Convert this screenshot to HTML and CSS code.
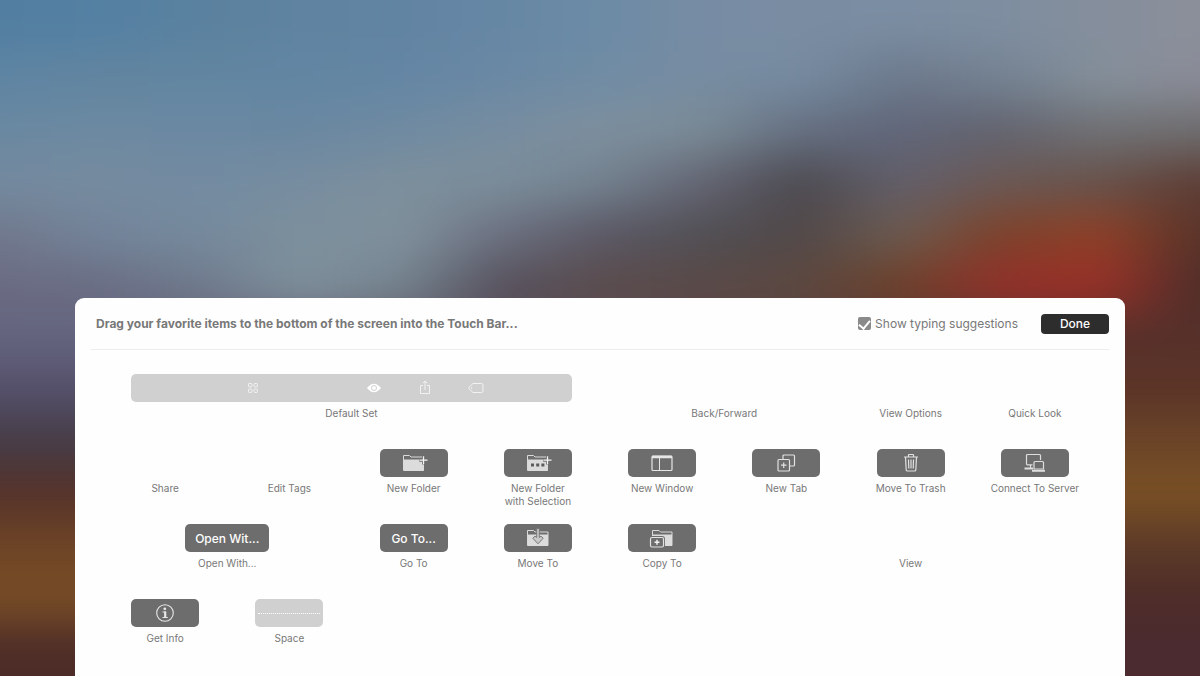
FILE: index.html
```html
<!DOCTYPE html>
<html lang="en">

<head>
    <meta charset="UTF-8">
    <meta name="viewport" content="width=device-width, initial-scale=1.0">
    <title>Customize Touch Bar</title>
    <link rel="stylesheet" href="styles.css">
</head>

<body>
    <div class="wallpaper">
        <div class="band band1"></div>
        <div class="band band1"></div>
        <div class="band band2"></div>
        <div class="band band3"></div>
        <div class="band band4"></div>
        <div class="band band5"></div>
        <div class="band band6"></div>
        <div class="band band7"></div>
        <div class="band band8"></div>
        <div class="band band9"></div>
        <div class="band band10"></div>
        <div class="band band11"></div>
        <div class="band band12"></div>
        <div class="band band13"></div>
        <div class="band band13"></div>
    </div>

    <main class="panel">
        <header class="header">
            <h1 class="title">Drag your favorite items to the bottom of the screen into the Touch Bar...</h1>
            <label class="typing"><input type="checkbox" class="check" checked>Show typing suggestions</label>
            <button class="done">Done</button>
        </header>

        <div class="items">
            <!-- row 1 -->
            <div class="item span4">
                <button class="key set" aria-labelledby="l-default">
                    <svg class="icon small" viewBox="0 0 18 18" fill="none" stroke="#f2f2f2">
                        <rect x="4.5" y="4.5" width="3.4" height="3.4" rx=".6"/>
                        <rect x="10" y="4.5" width="3.4" height="3.4" rx=".6"/>
                        <rect x="4.5" y="10" width="3.4" height="3.4" rx=".6"/>
                        <rect x="10" y="10" width="3.4" height="3.4" rx=".6"/>
                    </svg>
                    <span class="group">
                        <svg class="icon small" viewBox="0 0 18 18">
                            <path d="M2 9Q9 .5 16 9Q9 17.5 2 9Z" fill="#fff"/>
                            <circle cx="9" cy="9" r="2.5" fill="#fff" stroke="#cfcfcf"/>
                        </svg>
                        <svg class="icon small" viewBox="0 0 18 18" fill="none" stroke="#f2f2f2">
                            <path d="M7 6.5H4.5V14.5H13.5V6.5H11M9 11V2M6.800 4.200L9 2L11.200 4.200"/>
                        </svg>
                        <svg class="icon small" viewBox="0 0 18 18" fill="none" stroke="#f2f2f2">
                            <path d="M6 4.500H14.500Q16 4.500 16 6V12Q16 13.500 14.500 13.500H6L2 9.800Q1.400 9 2 8.200Z"/>
                            <circle cx="4.600" cy="9" r=".5"/>
                        </svg>
                    </span>
                </button>
                <span class="name" id="l-default">Default Set</span>
            </div>
            <div class="item span2"><span class="blank"></span><span class="name">Back/Forward</span></div>
            <div class="item"><span class="blank"></span><span class="name">View Options</span></div>
            <div class="item"><span class="blank"></span><span class="name">Quick Look</span></div>

            <!-- row 2 -->
            <div class="item"><span class="blank"></span><span class="name">Share</span></div>
            <div class="item"><span class="blank"></span><span class="name">Edit Tags</span></div>
            <div class="item">
                <button class="key" aria-labelledby="l-folder">
                    <svg class="icon" viewBox="0 0 28 20">
                        <path d="M3.500 17.500V2.500H9.500L11 4H23.500V17.500Z" fill="#6d6d6d" stroke="#dadada"/>
                        <path d="M4 6.500H23.500V18H4Z" fill="#dcdcdc"/>
                        <path d="M23.500 2.500V11.500M19.200 7.200H28" stroke="#6d6d6d" stroke-width="3"/>
                        <path d="M23.500 3.200V11.200M19.500 7.200H27.500" stroke="#f4f4f4" stroke-width="1.300"/>
                    </svg>
                </button>
                <span class="name" id="l-folder">New Folder</span>
            </div>
            <div class="item">
                <button class="key" aria-labelledby="l-selection">
                    <svg class="icon" viewBox="0 0 28 20">
                        <path d="M3.500 17.500V2.500H9.500L11 4H23.500V17.500Z" fill="#6d6d6d" stroke="#dadada"/>
                        <path d="M4 6.500H23.500V18H4Z" fill="#dcdcdc"/>
                        <path d="M7 10.500h3v3h-3zM12.200 10.500h3v3h-3zM17.400 10.500h3v3h-3z" fill="#5c5c5c"/>
                        <path d="M23.500 2.500V11.500M19.200 7.200H28" stroke="#6d6d6d" stroke-width="3"/>
                        <path d="M23.500 3.200V11.200M19.500 7.200H27.500" stroke="#f4f4f4" stroke-width="1.300"/>
                    </svg>
                </button>
                <span class="name" id="l-selection">New Folder<br>with Selection</span>
            </div>
            <div class="item">
                <button class="key" aria-labelledby="l-window">
                    <svg class="icon" viewBox="0 0 28 20" fill="none" stroke="#e6e6e6">
                        <rect x="4" y="3" width="20" height="14.500" rx="1" stroke-width="1.200"/>
                        <path d="M4 4H24" stroke-width="2.500"/>
                        <path d="M11.500 4V17.500"/>
                    </svg>
                </button>
                <span class="name" id="l-window">New Window</span>
            </div>
            <div class="item">
                <button class="key" aria-labelledby="l-tab">
                    <svg class="icon" viewBox="0 0 28 20" fill="none" stroke="#e2e2e2" stroke-width="1.200">
                        <path d="M11 6.300V3Q11 2 12 2H21.500Q22.500 2 22.500 3V12Q22.500 13 21.500 13H17.500"/>
                        <rect x="6" y="6.500" width="11.500" height="11.500" rx="1"/>
                        <path d="M11.700 9.500V15M9 12.200H14.500"/>
                    </svg>
                </button>
                <span class="name" id="l-tab">New Tab</span>
            </div>
            <div class="item">
                <button class="key" aria-labelledby="l-trash">
                    <svg class="icon" viewBox="0 0 28 20" fill="none" stroke="#e2e2e2" stroke-width="1.200">
                        <path d="M7 4H21M11.500 4V2Q11.500 1.500 12 1.500H16Q16.500 1.500 16.500 2V4M8.500 4L9.200 17Q9.300 18 10.300 18H17.700Q18.700 18 18.800 17L19.500 4M11.500 6.500L11.800 15.500M14 6.500V15.500M16.500 6.500L16.200 15.500"/>
                    </svg>
                </button>
                <span class="name" id="l-trash">Move To Trash</span>
            </div>
            <div class="item">
                <button class="key" aria-labelledby="l-server">
                    <svg class="icon" viewBox="0 0 28 20" fill="none" stroke="#dedede" stroke-width="1.200">
                        <path d="M11.500 11.800H6.500Q5.500 11.800 5.500 10.800V2.500Q5.500 1.500 6.500 1.500H18.500Q19.500 1.500 19.500 2.500V7M9.500 12V15"/>
                        <path d="M3.500 15.500H12" stroke-width="2"/>
                        <path d="M13 16V9.500Q13 8.500 14 8.500H21.500Q22.500 8.500 22.500 9.500V16Z"/>
                        <path d="M11 17.800H24" stroke-width="2"/>
                    </svg>
                </button>
                <span class="name" id="l-server">Connect To Server</span>
            </div>

            <!-- row 3 -->
            <div class="item span2">
                <button class="key wide" aria-labelledby="l-open">Open Wit...</button>
                <span class="name" id="l-open">Open With...</span>
            </div>
            <div class="item">
                <button class="key" aria-labelledby="l-go">Go To...</button>
                <span class="name" id="l-go">Go To</span>
            </div>
            <div class="item">
                <button class="key" aria-labelledby="l-move">
                    <svg class="icon" viewBox="0 0 28 20">
                        <path d="M3.500 17.500V2.500H9.500L11 4H24V17.500Z" fill="#6d6d6d" stroke="#dadada"/>
                        <path d="M4 6.500H24V18H4Z" fill="#dcdcdc"/>
                        <path d="M12.700 .5H15.300V9.500L17 8.200L19.200 10.200L14 15.800L8.800 10.200L11 8.200L12.700 9.500Z" fill="#c9c9c9" stroke="#777"/>
                    </svg>
                </button>
                <span class="name" id="l-move">Move To</span>
            </div>
            <div class="item">
                <button class="key" aria-labelledby="l-copy">
                    <svg class="icon" viewBox="0 0 28 20">
                        <path d="M4.500 17V2.500H11L12.500 4H24V17.500Z" fill="#6d6d6d" stroke="#dadada"/>
                        <path d="M5 6.500H24V18H5Z" fill="#dcdcdc"/>
                        <rect x="2.500" y="9.500" width="13" height="9.500" rx="1.500" fill="#6d6d6d" stroke="#6d6d6d" stroke-width="3"/>
                        <rect x="2.500" y="9.500" width="13" height="9.500" rx="1.500" fill="#6d6d6d" stroke="#e2e2e2" stroke-width="1.200"/>
                        <path d="M9 11.800V16.800M6.500 14.300H11.500" stroke="#f4f4f4" stroke-width="1.400"/>
                    </svg>
                </button>
                <span class="name" id="l-copy">Copy To</span>
            </div>
            <div class="item span3"><span class="blank"></span><span class="name">View</span></div>

            <!-- row 4 -->
            <div class="item">
                <button class="key" aria-labelledby="l-info">
                    <svg class="icon" viewBox="0 0 28 20" fill="none" stroke="#e8e8e8">
                        <circle cx="14" cy="10" r="8.300" stroke-width="1.100"/>
                        <circle cx="13.800" cy="5.800" r="1.400" fill="#e8e8e8" stroke="none"/>
                        <path d="M14.200 8.500V14.500" stroke-width="2.200"/>
                        <path d="M11.500 9H15M11.500 14.500H16.800"/>
                    </svg>
                </button>
                <span class="name" id="l-info">Get Info</span>
            </div>
            <div class="item">
                <button class="key light" aria-labelledby="l-space"><span class="dots"></span></button>
                <span class="name" id="l-space">Space</span>
            </div>
        </div>
    </main>
</body>

</html>
```
FILE: styles.css
```css
* {
    box-sizing: border-box;
}

body {
    margin: 0;
    min-height: 100vh;
    padding-top: 298px;
    display: flex;
    flex-direction: column;
    align-items: center;
    background-color: #5a5560;
    font-family: Inter, "Liberation Sans", sans-serif;
    color: #787878;
}

/* soft mountain wallpaper, built from blurred colour bands */
.wallpaper {
    position: fixed;
    inset: -52px;
    z-index: -1;
    display: flex;
    flex-direction: column;
    filter: blur(22px);
}

.band {
    flex: 1;
}

.band1 {
    background: linear-gradient(90deg, #527ea1 4%, #5480a3, #5a819f, #5f83a0, #6284a3, #6687a4, #6c8ba5, #778ca4, #7a8ca2, #7b8da2, #7e8ea0, #858e9c, #8b8f9a 96%);
}

.band2 {
    background: linear-gradient(90deg, #5f85a3 4%, #6285a0, #6286a1, #6286a3, #6486a4, #6a88a4, #708ca4, #778ca2, #768ba0, #6c798b, #748292, #84909b, #8b8c98 96%);
}

.band3 {
    background: linear-gradient(90deg, #6a88a1 4%, #6c89a1, #6b88a2, #6a87a1, #6f8aa1, #778da0, #7e8f9e, #7b8c97, #667082, #60667a, #62636f, #707175, #6e6e70 96%);
}

.band4 {
    background: linear-gradient(90deg, #748a9f 4%, #768b9f, #738ba1, #778da0, #7d8f9c, #7c8e9b, #748390, #646574, #4b494f, #625f6b, #6b5955, #66524b, #5d3d35 96%);
}

.band5 {
    background: linear-gradient(90deg, #71788c 4%, #73849a, #768a9d, #7c8f9c, #80919d, #6c7181, #5b5866, #504f54, #514849, #6c5b50, #7c422a, #8f4026, #5a3429 96%);
}

.band6 {
    background: linear-gradient(90deg, #6a6b82 4%, #6a6d82, #6f7a8c, #7f919c, #74848f, #55505c, #5a4c4c, #5a4947, #5c483f, #6d3f28, #942f29, #9a2f28, #4e2e29 96%);
}

.band7 {
    background: linear-gradient(90deg, #64647f 12%, #56302a 88%);
}

.band8 {
    background: linear-gradient(90deg, #55506a 12%, #5c3428 88%);
}

.band9 {
    background: linear-gradient(90deg, #453c46 12%, #6b4528 88%);
}

.band10 {
    background: linear-gradient(90deg, #56322a 12%, #7a5024 88%);
}

.band11 {
    background: linear-gradient(90deg, #6e4526 12%, #5c3a28 88%);
}

.band12 {
    background: linear-gradient(90deg, #784d26 12%, #4d2c29 88%);
}

.band13 {
    background: linear-gradient(90deg, #4d2c28 12%, #4b2b30 88%);
}

.panel {
    flex: 1;
    width: 87.5%;
    background-color: #fefefe;
    border-radius: 9px 9px 0 0;
}

.header {
    display: flex;
    align-items: center;
    height: 52px;
    margin: 0 16px;
    padding-left: 5px;
    border-bottom: 1px solid #ededed;
}

.title {
    flex: 1;
    margin: 0;
    font-size: 12px;
    font-weight: 700;
}

.typing {
    display: flex;
    align-items: center;
    gap: 4px;
    font-size: 12px;
}

.check {
    appearance: none;
    display: flex;
    justify-content: center;
    width: 13px;
    height: 13px;
    margin: 0;
    padding-top: 1px;
    border-radius: 2px;
    background-color: #8a8a8a;
}

.check:checked::before {
    content: "";
    width: 5px;
    height: 9px;
    border: solid #fff;
    border-width: 0 2px 2px 0;
    transform: rotate(40deg);
}

.done {
    width: 68px;
    height: 20px;
    margin-left: 23px;
    padding: 0;
    border: none;
    border-radius: 4px;
    background-color: #2d2d2d;
    color: #fff;
    font: 500 12px Inter, sans-serif;
}

.items {
    display: grid;
    grid-template-columns: repeat(8, 1fr);
    grid-auto-rows: 59px;
    row-gap: 16px;
    padding: 24px 28px 16px;
}

.item {
    display: flex;
    flex-direction: column;
    align-items: center;
    gap: 5px;
    text-align: center;
}

.span2 {
    grid-column: span 2;
}

.span3 {
    grid-column: span 3;
}

.span4 {
    grid-column: span 4;
}

.key,
.blank {
    width: 68px;
    height: 28px;
}

.key {
    display: flex;
    align-items: center;
    justify-content: center;
    flex-shrink: 0;
    padding: 0;
    border: none;
    border-radius: 5px;
    background-color: #6d6d6d;
    color: #fff;
    font: 500 12px Inter, sans-serif;
}

.wide {
    width: 84px;
}

.light {
    background-color: #d0d0d0;
}

.set {
    width: calc(100% - 56px);
    justify-content: space-between;
    padding: 0 87px 0 113px;
    background-color: #d0d0d0;
}

.group {
    display: flex;
    gap: 33px;
}

.icon {
    display: block;
    width: 28px;
    height: 20px;
}

.small {
    width: 18px;
    height: 18px;
}

.dots {
    width: 62px;
    border-top: 1px dotted #fff;
}

.name {
    font-size: 10px;
    line-height: 13px;
    white-space: nowrap;
}
```
